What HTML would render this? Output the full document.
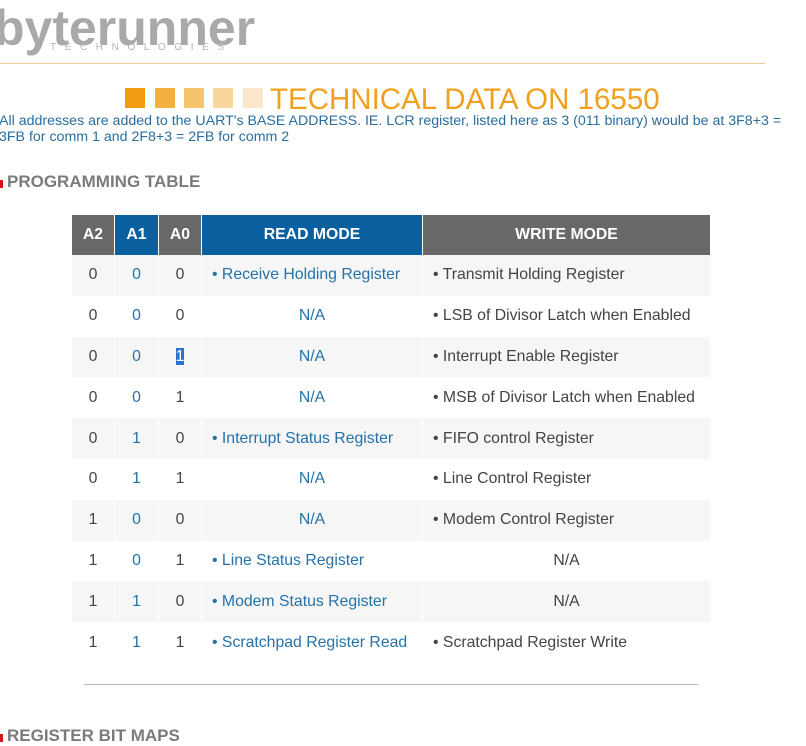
<!DOCTYPE html>
<html><head><style>
body{margin:0;width:806px;height:741px;overflow:hidden;background:#fff;font-family:"Liberation Sans",sans-serif;position:relative}
.abs{position:absolute}
.logo{left:-6px;top:0px;font-size:50px;font-weight:bold;color:#a9a9a9;letter-spacing:0px;line-height:56px;transform:scaleX(1.0)}
.tech{left:50px;top:42px;font-size:10px;color:#b5b5b5;letter-spacing:8.6px}
.hr{left:0;top:63px;width:765px;height:1px;background:#f2c79a}
.sq{top:88px;width:20px;height:20px}
.title{left:270px;top:84px;font-size:29.5px;color:#f0a01e;line-height:32px;white-space:nowrap}
.desc{left:-1px;top:113px;font-size:14.2px;color:#2a6e9e;line-height:16px;width:806px}
.h{left:7px;font-size:17px;font-weight:bold;color:#7b7b7b}
.mark{left:0;width:3px;height:8px;background:#d01818}
table{position:absolute;left:72px;top:215px;border-collapse:collapse;font-size:15.8px}
th{height:40px;color:#fff;font-weight:bold;text-align:center;border-right:1px solid #fff;padding:0}
td{height:40.8px;text-align:center;padding:0;color:#444;border-right:1px solid #fff}
tr:nth-child(even) td{background:#f6f6f6}
.b{color:#2472a8}
td.l{text-align:left;padding-left:10px}
.sel{background:#2a74d0;color:#fff}
</style></head><body>
<div class="abs logo">byterunner</div>
<div class="abs tech">TECHNOLOGIES</div>
<div class="abs hr"></div>
<div class="abs sq" style="left:125px;background:#f39c12"></div>
<div class="abs sq" style="left:155px;background:#f5b040"></div>
<div class="abs sq" style="left:184px;background:#f7c46e"></div>
<div class="abs sq" style="left:213px;background:#f9d79c"></div>
<div class="abs sq" style="left:243px;background:#fbe8cc"></div>
<div class="abs title">TECHNICAL DATA ON 16550</div>
<div class="abs desc">All addresses are added to the UART's BASE ADDRESS. IE. LCR register, listed here as 3 (011 binary) would be at 3F8+3 =<br>3FB for comm 1 and 2F8+3 = 2FB for comm 2</div>
<div class="abs mark" style="top:180px"></div>
<div class="abs h" style="top:172px">PROGRAMMING TABLE</div>
<table>
<tr><th style="width:42px;background:#686868">A2</th><th style="width:43px;background:#0a5f9e">A1</th><th style="width:42px;background:#686868">A0</th><th style="width:220px;background:#0a5f9e">READ MODE</th><th style="width:287px;background:#686868">WRITE MODE</th></tr>
<tr><td>0</td><td class="b">0</td><td>0</td><td class="b l">• Receive Holding Register</td><td class="l">• Transmit Holding Register</td></tr>
<tr><td>0</td><td class="b">0</td><td>0</td><td class="b">N/A</td><td class="l">• LSB of Divisor Latch when Enabled</td></tr>
<tr><td>0</td><td class="b">0</td><td><span class="sel">1</span></td><td class="b">N/A</td><td class="l">• Interrupt Enable Register</td></tr>
<tr><td>0</td><td class="b">0</td><td>1</td><td class="b">N/A</td><td class="l">• MSB of Divisor Latch when Enabled</td></tr>
<tr><td>0</td><td class="b">1</td><td>0</td><td class="b l">• Interrupt Status Register</td><td class="l">• FIFO control Register</td></tr>
<tr><td>0</td><td class="b">1</td><td>1</td><td class="b">N/A</td><td class="l">• Line Control Register</td></tr>
<tr><td>1</td><td class="b">0</td><td>0</td><td class="b">N/A</td><td class="l">• Modem Control Register</td></tr>
<tr><td>1</td><td class="b">0</td><td>1</td><td class="b l">• Line Status Register</td><td>N/A</td></tr>
<tr><td>1</td><td class="b">1</td><td>0</td><td class="b l">• Modem Status Register</td><td>N/A</td></tr>
<tr><td>1</td><td class="b">1</td><td>1</td><td class="b l">• Scratchpad Register Read</td><td class="l">• Scratchpad Register Write</td></tr>
</table>
<div class="abs" style="left:84px;top:684px;width:614px;height:1px;background:#bbb"></div>
<div class="abs mark" style="top:734px"></div>
<div class="abs h" style="top:726px">REGISTER BIT MAPS</div>
</body></html>
